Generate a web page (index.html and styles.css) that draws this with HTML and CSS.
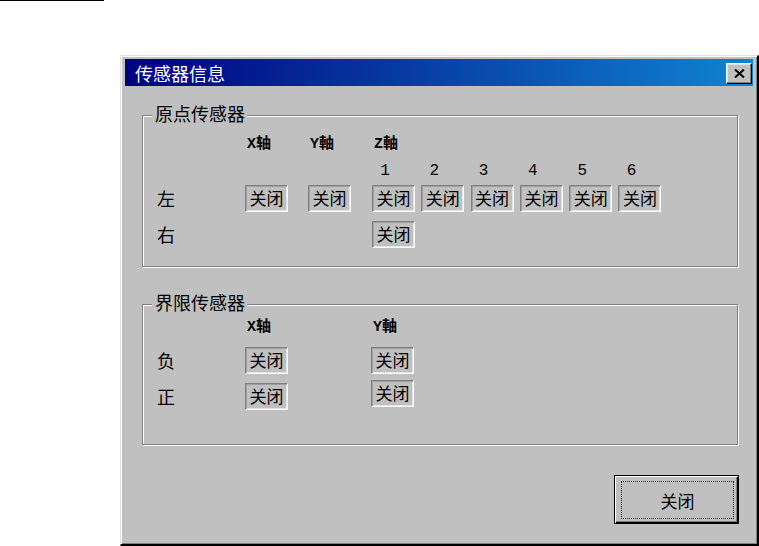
FILE: index.html
```html
<!DOCTYPE html>
<html lang="zh-CN">
<head>
    <meta charset="UTF-8">
    <title>传感器信息</title>
    <link rel="stylesheet" href="styles.css">
</head>
<body>
    <div class="topline"></div>

    <div class="window">
        <div class="titlebar">
            <span class="title">传感器信息</span>
            <button class="close-x" aria-label="关闭">
                <svg width="11" height="9" viewBox="0 0 11 9">
                    <path d="M1 0.5 L10 8.5 M10 0.5 L1 8.5" stroke="#000" stroke-width="2" fill="none"/>
                </svg>
            </button>
        </div>

        <div class="client">
            <!-- origin sensors -->
            <div class="group origin">
                <span class="caption">原点传感器</span>
                <div class="grid origin-grid">
                    <span></span>
                    <span class="axis">X轴</span>
                    <span class="axis">Y軸</span>
                    <span class="axis span6">Z軸</span>

                    <span></span><span></span><span></span>
                    <span class="num">1</span>
                    <span class="num">2</span>
                    <span class="num">3</span>
                    <span class="num">4</span>
                    <span class="num">5</span>
                    <span class="num">6</span>

                    <span class="label">左</span>
                    <span class="state">关闭</span>
                    <span class="state">关闭</span>
                    <span class="state">关闭</span>
                    <span class="state">关闭</span>
                    <span class="state">关闭</span>
                    <span class="state">关闭</span>
                    <span class="state">关闭</span>
                    <span class="state">关闭</span>

                    <span class="label">右</span>
                    <span></span><span></span>
                    <span class="state">关闭</span>
                </div>
            </div>

            <!-- limit sensors -->
            <div class="group limit">
                <span class="caption">界限传感器</span>
                <div class="grid limit-grid">
                    <span></span>
                    <span class="axis">X轴</span>
                    <span class="axis">Y軸</span>

                    <span class="label">负</span>
                    <span class="state">关闭</span>
                    <span class="state">关闭</span>

                    <span class="label">正</span>
                    <span class="state">关闭</span>
                    <span class="state raised">关闭</span>
                </div>
            </div>

            <div class="actions">
                <button class="btn default"><span class="focus">关闭</span></button>
            </div>
        </div>
    </div>
</body>
</html>
```

FILE: styles.css
```css
html, body {
    margin: 0;
    padding: 0;
    background: #fff;
    overflow: hidden;
}

body {
    font-family: "Noto Sans CJK SC", "Noto Sans", sans-serif;
    color: #000;
}

.topline {
    width: 104px;
    height: 1px;
    background: #000;
}

/* dialog frame */
.window {
    box-sizing: border-box;
    width: 639px;
    height: 491px;
    margin: 54px 0 0 120px;
    padding: 3px 4px 2px 4px;
    background: #c0c0c0;
    border-style: solid;
    border-width: 1px 2px 2px 1px;
    border-color: #dfdfdf #000 #000 #dfdfdf;
    box-shadow: inset 1px 1px #fff, inset -1px -1px #808080;
}

.titlebar {
    height: 27px;
    display: flex;
    align-items: center;
    justify-content: space-between;
    padding: 0 1px 0 10px;
    background: linear-gradient(to right, #000080, #1084d0);
}

.title {
    color: #fff;
    font-size: 18px;
    line-height: 20px;
}

.close-x {
    box-sizing: border-box;
    width: 26px;
    height: 21px;
    margin-top: 1px;
    padding: 0;
    display: flex;
    align-items: center;
    justify-content: center;
    background: #c0c0c0;
    border: 1px solid;
    border-color: #fff #000 #000 #fff;
    box-shadow: inset -1px -1px #808080, inset 1px 1px #dfdfdf;
}

.client {
    padding-top: 29px;
}

/* etched group boxes */
.group {
    position: relative;
    margin: 0 15px 0 17px;
    border: 1px solid #808080;
    box-shadow: inset 1px 1px #fff, 1px 1px #fff;
    padding-left: 14px;
}

.group.origin {
    padding-top: 16px;
    padding-bottom: 18px;
}

.group.limit {
    margin-top: 37px;
    padding-top: 10px;
    padding-bottom: 34px;
}

.caption {
    position: absolute;
    left: 9px;
    top: -13px;
    padding: 0 2px 0 3px;
    background: #c0c0c0;
    font-size: 18px;
    line-height: 20px;
}

.grid {
    display: grid;
    align-items: start;
}

.origin-grid {
    grid-template-columns: 88px 63px 64px repeat(6, 49.3px);
    grid-template-rows: 26px 27px 36px 27px;
}

.limit-grid {
    grid-template-columns: 88px 126px 100px;
    grid-template-rows: 32px 36px 27px;
}

.span6 {
    grid-column: span 6;
}

.axis {
    padding-left: 2px;
    font-family: "Liberation Mono", "Noto Sans CJK SC", monospace;
    font-size: 15px;
    font-weight: bold;
    line-height: 26px;
}

.num {
    width: 26px;
    text-align: center;
    font-family: "Liberation Mono", monospace;
    font-size: 16px;
    line-height: 27px;
}

.label {
    font-size: 18px;
    line-height: 27px;
}

.state {
    box-sizing: border-box;
    width: 43px;
    height: 27px;
    text-align: center;
    font-size: 17px;
    line-height: 24px;
    border: 1px solid;
    border-color: #808080 #fff #fff #808080;
    box-shadow: inset 1px 1px #a0a0a0, inset -1px -1px #e4e4e4;
}

.state.raised {
    margin-top: -3px;
}

.actions {
    display: flex;
    justify-content: flex-end;
    margin-top: 30px;
    padding-right: 14px;
}

.btn {
    box-sizing: border-box;
    width: 125px;
    height: 49px;
    padding: 5px 4px 4px 6px;
    background: #c0c0c0;
    border: 1px solid #000;
    box-shadow: inset 1px 1px #fff, inset -1px -1px #000, inset -2px -2px #808080;
    font-family: inherit;
    display: flex;
}

.focus {
    flex: 1;
    display: flex;
    align-items: center;
    justify-content: center;
    border: 1px dotted #222;
    font-size: 17px;
    color: #000;
}
```
